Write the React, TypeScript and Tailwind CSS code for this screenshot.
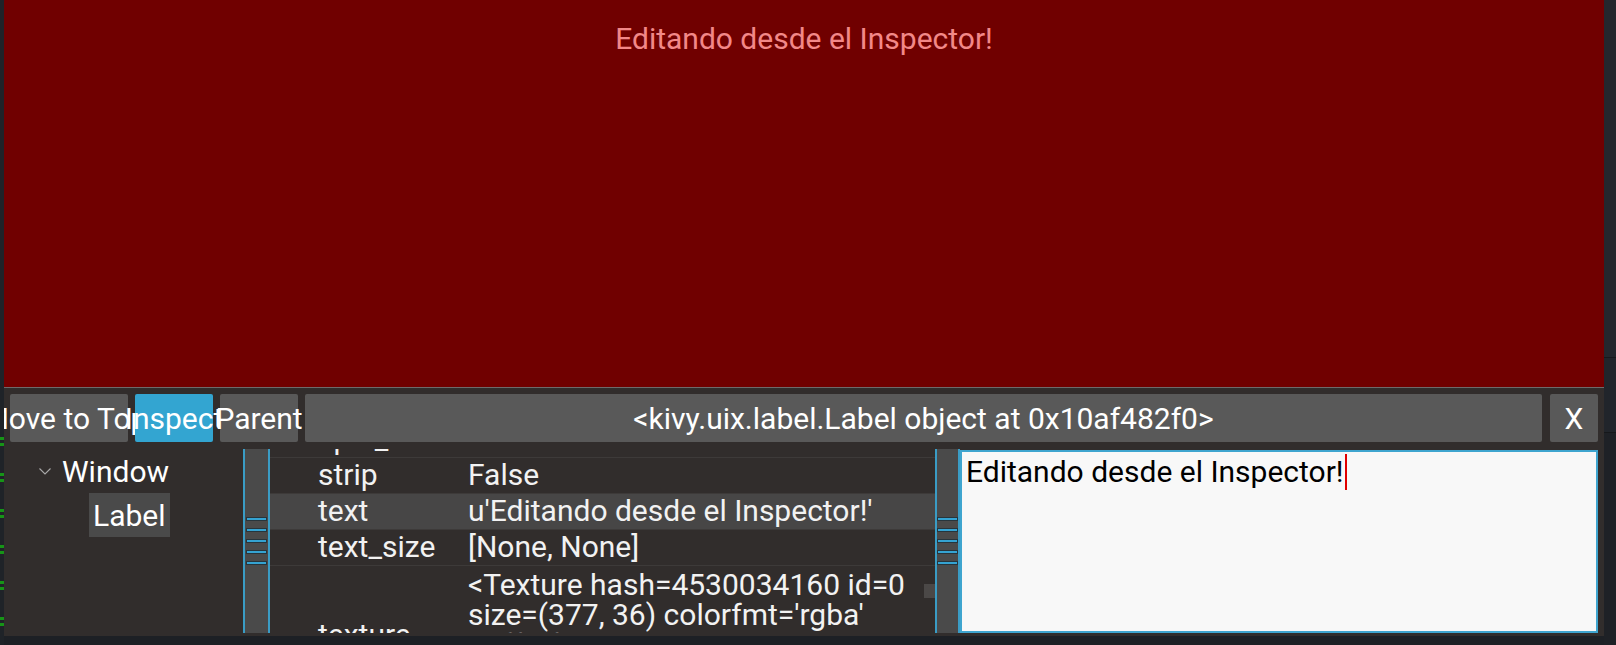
import React from 'react';

function Grip() {
  return (
    <div className="flex flex-col items-center gap-[9px]">
      {[0, 1, 2, 3, 4].map((i) => (
        <div key={i} className="h-[2px] w-[19px] bg-[#35a3d2] shadow-[0_0_0_1px_#27353c]" />
      ))}
    </div>
  );
}

function Splitter({ className }: { className: string }) {
  return (
    <div className={`flex h-full shrink-0 items-center justify-center border-x-2 border-[#3a9cc5] bg-[#4a4a4a] ${className}`}>
      <Grip />
    </div>
  );
}

function ToolButton({ label, className }: { label: string; className: string }) {
  // kivy paints each button (bg + label) in order, so later buttons cover earlier overflowing text
  return (
    <div className={`relative flex h-[48px] shrink-0 items-center justify-center rounded-[2px] ${className}`}>
      <span className="shrink-0 whitespace-nowrap text-white">{label}</span>
    </div>
  );
}

const props = [
  { key: 'split_str', value: "''" },
  { key: 'strip', value: 'False' },
  { key: 'text', value: "u'Editando desde el Inspector!'", active: true },
  { key: 'text_size', value: '[None, None]' },
];

export default function App() {
  return (
    <div className="flex h-[645px] w-[1616px] overflow-hidden bg-[#1d2025] font-['Roboto',sans-serif] text-[30px] leading-[35px]">
      {/* editor gutter on the left */}
      <div className="flex w-[4px] shrink-0 flex-col gap-[27px] bg-[#1f2328] pt-[437px]">
        {[0, 1, 2, 3, 4, 5].map((i) => (
          <div key={i} className="flex flex-col gap-[3px]">
            <div className="h-[3px] w-[4px] bg-[#179417]" />
            <div className="h-[3px] w-[4px] bg-[#179417]" />
          </div>
        ))}
      </div>

      {/* app window */}
      <div className="flex h-[636px] w-[1600px] shrink-0 flex-col overflow-hidden">
        <div className="h-[388px] border-b border-[#6e6b6b] bg-[#700000] pt-[21px] text-center text-[#f28888]">
          Editando desde el Inspector!
        </div>

        <div className="flex flex-1 flex-col bg-[#312d2c] pb-[3px] pt-[6px]">
          {/* top bar */}
          <div className="flex gap-[7px] px-[6px]">
            <ToolButton label="Move to Top" className="w-[118px] bg-[#595959] pr-[8px]" />
            <ToolButton label="Inspect" className="w-[78px] bg-[#33a5d1]" />
            <ToolButton label="Parent" className="w-[78px] bg-[#595959]" />
            <ToolButton label="<kivy.uix.label.Label object at 0x10af482f0>" className="flex-1 bg-[#595959]" />
            <ToolButton label="X" className="ml-[1px] w-[48px] bg-[#595959]" />
          </div>

          <div className="mt-[7px] flex h-[184px]">
            {/* widget tree */}
            <div className="w-[239px] shrink-0 text-white">
              <div className="flex h-[44px] items-center pl-[35px]">
                <svg width="12" height="7" viewBox="0 0 12 7" className="shrink-0">
                  <path d="M0.5 0.5 L6 6 L11.5 0.5" fill="none" stroke="#a9a9a9" strokeWidth="1.1" />
                </svg>
                <span className="ml-[11px]">Window</span>
              </div>
              <div className="flex h-[44px] pl-[85px]">
                <div className="flex items-center bg-[#4a4a4a] px-[4px]">Label</div>
              </div>
            </div>

            <Splitter className="w-[27px]" />

            {/* property list */}
            <div className="relative w-[665px] shrink-0 overflow-hidden text-[#f2f2f2]">
              <div className="-mt-[28px] flex flex-col">
                {props.map((p) => (
                  <div
                    key={p.key}
                    className={`flex h-[36px] shrink-0 border-t border-[#3d3a39] leading-[34px] ${p.active ? 'bg-[#474646]' : ''}`}
                  >
                    <div className="w-[198px] shrink-0 whitespace-nowrap pl-[48px]">{p.key}</div>
                    <div className="whitespace-nowrap">{p.value}</div>
                  </div>
                ))}
                <div className="flex h-[138px] shrink-0 border-t border-[#3d3a39]">
                  <div className="w-[198px] shrink-0 self-center pl-[48px]">texture</div>
                  <div className="whitespace-nowrap pt-[4px] leading-[30px]">
                    <div>&lt;Texture hash=4530034160 id=0</div>
                    <div>size=(377, 36) colorfmt='rgba'</div>
                    <div>bufferfmt='ubyte' source=None</div>
                    <div>observers=0&gt;</div>
                  </div>
                </div>
              </div>
              <div className="absolute right-0 top-[135px] h-[14px] w-[11px] bg-[#4b4847]" />
            </div>

            <Splitter className="w-[25px]" />

            {/* text editor */}
            <div className="mt-[1px] w-[638px] shrink-0 border-2 border-[#3fa5cf] bg-[#f8f8f8] pl-[4px] pt-[2px] text-black">
              Editando desde el Inspector!
              <span className="ml-[1px] inline-block h-[36px] w-[2px] align-top bg-[#e00000]" />
            </div>
          </div>
        </div>
      </div>

      {/* editor gutter on the right */}
      <div className="flex w-[12px] shrink-0 flex-col">
        <div className="h-[357px] bg-[#23272d]" />
        <div className="h-[75px] border-t border-[#17191d] bg-[#21252b]" />
        <div className="flex-1 border-t border-[#16181b] bg-[#1e2126]" />
      </div>
    </div>
  );
}
